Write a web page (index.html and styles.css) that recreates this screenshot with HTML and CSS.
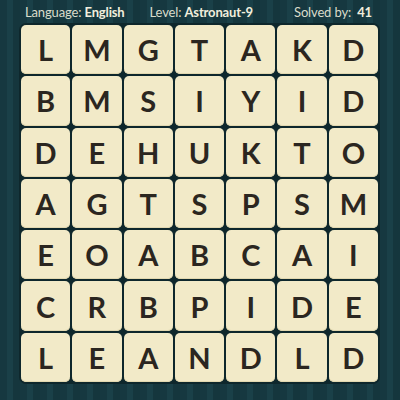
FILE: index.html
```html
<!DOCTYPE html>
<html>
<head>
<meta charset="utf-8">
<link rel="stylesheet" href="styles.css">
</head>
<body>
<div class="page">
  <div class="header">
    <span class="item lang">Language: <b>English</b></span>
    <span class="item level">Level: <b>Astronaut-9</b></span>
    <span class="item solved">Solved by: <b class="count">41</b></span>
  </div>
  <div class="board">
    <div class="tile">L</div><div class="tile">M</div><div class="tile">G</div><div class="tile">T</div><div class="tile">A</div><div class="tile">K</div><div class="tile">D</div>
    <div class="tile">B</div><div class="tile">M</div><div class="tile">S</div><div class="tile">I</div><div class="tile">Y</div><div class="tile">I</div><div class="tile">D</div>
    <div class="tile">D</div><div class="tile">E</div><div class="tile">H</div><div class="tile">U</div><div class="tile">K</div><div class="tile">T</div><div class="tile">O</div>
    <div class="tile">A</div><div class="tile">G</div><div class="tile">T</div><div class="tile">S</div><div class="tile">P</div><div class="tile">S</div><div class="tile">M</div>
    <div class="tile">E</div><div class="tile">O</div><div class="tile">A</div><div class="tile">B</div><div class="tile">C</div><div class="tile">A</div><div class="tile">I</div>
    <div class="tile">C</div><div class="tile">R</div><div class="tile">B</div><div class="tile">P</div><div class="tile">I</div><div class="tile">D</div><div class="tile">E</div>
    <div class="tile">L</div><div class="tile">E</div><div class="tile">A</div><div class="tile">N</div><div class="tile">D</div><div class="tile">L</div><div class="tile">D</div>
  </div>
</div>
</body>
</html>
```
FILE: styles.css
```css
html, body {
  margin: 0;
  padding: 0;
  width: 400px;
  height: 400px;
  overflow: hidden;
}
body {
  background-color: #173a41;
  background-image: repeating-linear-gradient(90deg,
    #163840 0px, #163840 7px,
    #1a4048 7px, #1a4048 13px,
    #15363d 13px, #15363d 20px);
  font-family: Lato, "Open Sans", sans-serif;
}
.page {
  display: flex;
  flex-direction: column;
}
.header {
  height: 23px;
  padding: 1px 28px 0 25px;
  box-sizing: border-box;
  display: flex;
  align-items: center;
  color: #d9dccb;
  font-size: 13px;
  letter-spacing: -0.15px;
  line-height: 1;
}
.header b {
  font-weight: 700;
  color: #f1eedd;
}
.level { margin-left: 25px; }
.solved { margin-left: auto; }
.count { margin-left: 3px; }
.board {
  margin-left: 19px;
  width: 357px;
  height: 357px;
  padding: 2px;
  border-radius: 7px;
  background: #0e272c;
  display: grid;
  grid-template-columns: repeat(7, 1fr);
  grid-template-rows: repeat(7, 1fr);
  gap: 2px;
  box-sizing: content-box;
}
.tile {
  background: #f2eac8;
  border-radius: 5px;
  display: flex;
  align-items: center;
  justify-content: center;
  color: #2b2620;
  font-size: 29px;
  font-weight: 700;
  box-shadow: inset 0 -1px 0 #e2d8b0;
}
```
